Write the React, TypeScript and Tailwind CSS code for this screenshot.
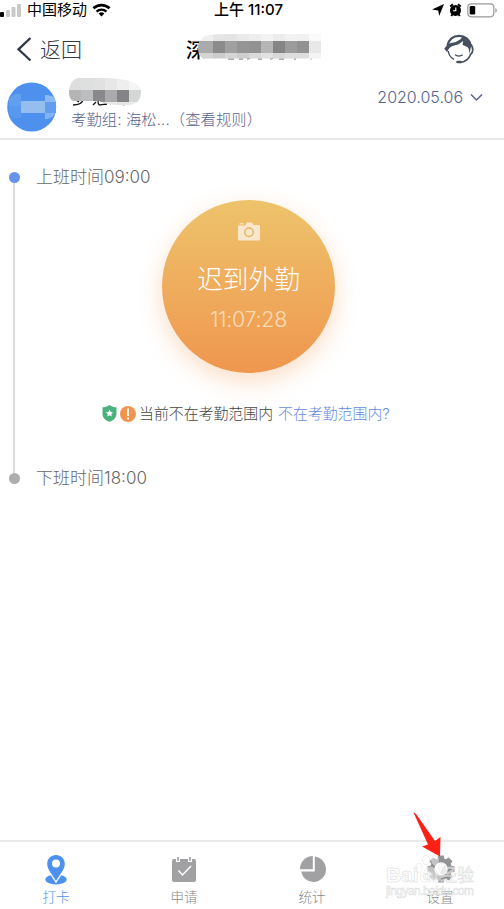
import { ReactNode } from 'react';

type TabItem = {
  label: string;
  active?: boolean;
  icon: ReactNode;
};

type Cell = [x: number, y: number, color: string];

const TITLE_CELLS: Cell[] = [
  [3, 0, '#efefef'],
  [18, 0, '#e6e6e6'],
  [30, 0, '#e4e4e4'],
  [42, 0, '#eaeaea'],
  [54, 0, '#eeeeee'],
  [66, 0, '#f3f3f3'],
  [78, 0, '#ececec'],
  [90, 0, '#f2f2f2'],
  [102, 0, '#f1f1f1'],
  [114, 0, '#fafafa'],
  [3, 7, '#aaaaaa'],
  [18, 7, '#8b8b8b'],
  [30, 7, '#a0a0a0'],
  [42, 7, '#959595'],
  [54, 7, '#929292'],
  [66, 7, '#b6b6b6'],
  [78, 7, '#858585'],
  [90, 7, '#9c9c9c'],
  [102, 7, '#929292'],
  [114, 7, '#e8e8e8'],
  [3, 19, '#d4d4d4'],
  [18, 19, '#cccccc'],
  [30, 19, '#d5d5d5'],
  [42, 19, '#cdcdcd'],
  [54, 19, '#d9d9d9'],
  [66, 19, '#e1e1e1'],
  [78, 19, '#d8d8d8'],
  [90, 19, '#dedede'],
  [102, 19, '#dddddd'],
  [114, 19, '#f4f4f4'],
];

const NAME_CELLS: Cell[] = [
  [0, 0, '#dedede'],
  [12, 0, '#dedfdf'],
  [24, 0, '#e1e1e1'],
  [36, 0, '#e7e7e7'],
  [48, 0, '#eeeeee'],
  [60, 0, '#f5f5f5'],
  [0, 12, '#b5b5b6'],
  [12, 12, '#bcbdbe'],
  [24, 12, '#88888d'],
  [36, 12, '#aaaaac'],
  [48, 12, '#838388'],
  [60, 12, '#d5d7d7'],
  [24, 24, '#e0e0e0'],
  [36, 24, '#e8e8e8'],
  [48, 24, '#e5e5e5'],
  [60, 24, '#e9eaea'],
];

const GEAR_TEETH = [0, 45, 90, 135, 180, 225, 270, 315];

function StatusBar() {
  return (
    <div className="flex h-5 items-center justify-between pr-[7px] text-black">
      <div className="flex w-[180px] items-center">
        <svg width="22" height="14" viewBox="0 0 22 14">
          <rect x="0" y="9" width="4" height="5" rx="1" fill="#000" />
          <rect x="6" y="7" width="4" height="7" rx="1" fill="#c9c9c9" />
          <rect x="11.500" y="4" width="4" height="10" rx="1" fill="#c9c9c9" />
          <rect x="17" y="1" width="4" height="13" rx="1" fill="#c9c9c9" />
        </svg>
        <span className="ml-[5px] text-[15px] leading-5">中国移动</span>
        <svg className="ml-[5px]" width="19" height="14" viewBox="0 0 20 14" fill="none" stroke="#000">
          <path d="M1.500 5.200a12.500 12.500 0 0 1 17 0" strokeWidth="2.800" />
          <path d="M4.800 8.600a7.600 7.600 0 0 1 10.400 0" strokeWidth="2.500" />
          <path d="M10 13.800 7 10.800a4.300 4.300 0 0 1 6 0z" fill="#000" stroke="none" />
        </svg>
      </div>
      <span className="text-[15px] font-medium leading-5">上午 11:07</span>
      <div className="flex w-[180px] items-center justify-end">
        <svg width="12" height="12" viewBox="0 0 12 12">
          <path d="M12 0 7.200 12 6.200 6.600 0 5.600z" fill="#000" />
        </svg>
        <svg className="ml-[5px]" width="13" height="14" viewBox="0 0 13 14">
          <path d="M1.200 3.500 4 1.300M11.800 3.500 9 1.300M2.200 13l1.500-2M10.800 13l-1.500-2" stroke="#000" strokeWidth="2" />
          <circle cx="6.500" cy="7.400" r="5.500" fill="#000" />
          <path d="M6.800 4.500v3.300H4" fill="none" stroke="#fff" strokeWidth="1.100" />
        </svg>
        <svg className="ml-[5px]" width="30" height="15" viewBox="0 0 30 15">
          <rect x=".8" y=".8" width="26" height="13" rx="3.500" fill="none" stroke="#999" strokeWidth="1.200" />
          <rect x="2.700" y="3" width="5.500" height="8.600" rx="1.300" fill="#000" />
          <path d="M28.400 5v4.800c1.800-.8 1.800-4 0-4.800z" fill="#999" />
        </svg>
      </div>
    </div>
  );
}

function ServiceIcon() {
  return (
    <svg width="32" height="32" viewBox="0 0 32 32" fill="none" stroke="#46505f">
      <path d="M4.500 12.500C6 6 10 2.800 16 2.800S26.500 6.500 27.600 12" strokeWidth="2.200" />
      <path d="M28 11.500c2.700 3.500 2.200 8-.4 10-1.800 4.500-5.700 7.500-10.700 7.900" strokeWidth="1.700" />
      <path d="M4.200 12 1.200 15.800l3 3.500c.8-3 2.500-5.400 5.500-6.400l6-1.600 4.500-3.200-.7 3.700 5.200 2.500c1.600 2 1.600 4.500 1.600 7l2.200-9.500-2.500-3.500-6-5.500-2.500 3.500-4.700 2.600-6 1.400z" fill="#46505f" stroke="none" />
      <path d="M5.300 18c.5 4 2.800 7 5.800 8.300" strokeWidth="1.400" />
      <path d="M12 21.800c2 1.700 5.500 1.700 7.700 0" strokeWidth="1.200" />
      <path d="M14.500 29h3" strokeWidth="2.600" strokeLinecap="round" />
    </svg>
  );
}

function Header() {
  return (
    <header className="flex h-[58px] items-center justify-between pl-4 pr-[29px] text-[#2f394a]">
      <button className="flex w-[168px] items-center" type="button">
        <svg width="16" height="26" viewBox="0 0 16 26" fill="none" stroke="#2f394a" strokeWidth="2.300">
          <path d="M14.500 2 2.500 13.300l12 11.200" />
        </svg>
        <span className="ml-2 pt-px text-[21px] font-light leading-7">返回</span>
      </button>
      <div className="flex flex-1 items-center text-black">
        <span className="pl-0.5 pt-[3px] text-[20px] font-medium leading-7">深</span>
        <svg className="-ml-[11px]" width="130" height="30" viewBox="0 0 130 30">
          <defs>
            <clipPath id="titleClip">
              <path d="M14 1C20 0 30 0 40 0h86v24.500H10C5 24 3 20 3 14S7 2 14 1z" />
            </clipPath>
          </defs>
          <path d="M33 25h6M44 25h4M52 25l3-.5M63 25h4M75 25l3-.5M84 25h5M99 25h2M115.500 25h1" stroke="#555" strokeWidth=".9" />
          <g clipPath="url(#titleClip)">
            {TITLE_CELLS.map(([x, y, color]) => (
              <rect key={`${x}-${y}`} x={x} y={y} width={x === 3 ? 15 : 12} height="12" fill={color} />
            ))}
          </g>
        </svg>
      </div>
      <ServiceIcon />
    </header>
  );
}

function UserRow() {
  return (
    <section className="flex h-[62px] border-b-2 border-[#e9e9e9] pl-1.5 pr-[21px] text-[#56648f]">
      <svg className="mt-1" width="52" height="52" viewBox="0 0 52 52">
        <circle cx="25.700" cy="25" r="24.500" fill="#4d90ee" />
        <path d="M3 16l6-4h6v12H3z" fill="#629fef" />
        <path d="M3 24h12v12H7l-4-4z" fill="#5998ef" />
        <path d="M15 19h24v12H15z" fill="#94beed" />
        <path d="M39 13c7 0 10 2 11 7H39z" fill="#8ebaf3" />
        <path d="M39 20h11v11H39z" fill="#639def" />
        <path d="M39 31h10c-2 4-5 6-10 6z" fill="#82b2f3" />
      </svg>
      <div className="ml-[11px] flex flex-1 flex-col">
        <svg width="74" height="31" viewBox="0 0 74 31">
          <defs>
            <clipPath id="nameClip">
              <path d="M9 0h30c18 1 33 4 33 13 0 8-3 13-12 14-11 1-21 0-30-4H6C1 23 0 18 0 14S2 1 9 0z" />
            </clipPath>
          </defs>
          <path d="M4 27c5 0 9-2 10-5M7 22l3 2M24 27l3-3M29 23c0 5 1 4 9 3M40 24l2 2M49 27v-2M54 27l3-1" fill="none" stroke="#111" strokeWidth="1.300" />
          <g clipPath="url(#nameClip)">
            {NAME_CELLS.map(([x, y, color]) => (
              <rect key={`${x}-${y}`} x={x} y={y} width="12" height="12" fill={color} />
            ))}
          </g>
        </svg>
        <p className="whitespace-pre pl-0.5 text-[15.300px] font-light leading-[21px] tracking-[0.080px]">考勤组: 海松...（查看规则）</p>
      </div>
      <button className="flex h-[38px] items-center" type="button">
        <span className="text-[16px] font-light">2020.05.06</span>
        <svg className="ml-[7px]" width="13" height="9" viewBox="0 0 13 9" fill="none" stroke="#56648f" strokeWidth="1.500">
          <path d="m1 1.500 5.500 5.500L12 1.500" />
        </svg>
      </button>
    </section>
  );
}

function PunchButton() {
  return (
    <button
      className="flex size-[173px] flex-col items-center rounded-full bg-linear-to-b from-[#edc36b] to-[#ef964f] pt-[22px] text-white shadow-[0_8px_24px_rgba(243,148,76,0.32)]"
      type="button"
    >
      <svg width="22" height="19" viewBox="0 0 22 19">
        <path d="M1 3.500h6L9 .5h5l1.500 2.500h5c1 0 1.500.5 1.500 1.500v12.500c0 1-.5 1.500-1.500 1.500h-19C.5 18.500 0 18 0 17V4.500c0-.6.300-1 1-1z" fill="#f8e7cd" />
        <path d="M1.500 1.800h4" stroke="#f8e7cd" strokeWidth="1.200" />
        <circle cx="11" cy="10.200" r="4.200" fill="none" stroke="#e9b566" strokeWidth="1.500" />
      </svg>
      <span className="mt-[21px] text-[25.700px] font-light leading-9">迟到外勤</span>
      <span className="mt-[7px] text-[21.500px] font-light leading-7 tracking-[-0.300px] text-[#f8dcb6]">11:07:28</span>
    </button>
  );
}

function Timeline() {
  return (
    <main className="flex h-[700px] items-start pt-[25px]">
      <div className="flex w-7 flex-col items-center pt-[7px]">
        <i className="size-[11px] rounded-full bg-[#6694ed]" />
        <i className="h-[290px] w-0.5 bg-[#dcdcde]" />
        <i className="size-[11px] rounded-full bg-[#adadad]" />
      </div>
      <div className="flex flex-1 flex-col pl-2 text-[17px] font-light text-[#666]">
        <p className="leading-6">上班时间09:00</p>
        <div className="mt-[11px] pl-[126px]">
          <PunchButton />
        </div>
        <div className="mt-[29px] flex items-center pl-[66px] text-[14.900px] leading-6">
          <svg className="-mt-0.5" width="15" height="17" viewBox="0 0 15 17">
            <path d="M7.500 0c2 1.700 4.300 2.300 7 2.300V9c0 3.800-3 6.300-7 7.800C3.500 15.300.5 12.800.5 9V2.300c2.700 0 5-.6 7-2.300z" fill="#49b17c" />
            <path d="m7.500 4.600 1.100 2.300 2.500.3-1.800 1.800.4 2.500-2.200-1.200-2.200 1.200.4-2.500L3.900 7.200l2.500-.3z" fill="#fff" />
          </svg>
          <svg className="ml-[3px]" width="16" height="16" viewBox="0 0 16 16">
            <circle cx="8" cy="8" r="8" fill="#ee954f" />
            <path d="M8 2.500v7.500M8 11.500v2" stroke="#fff" strokeWidth="1.800" />
          </svg>
          <span className="ml-[3px] text-[#444]">当前不在考勤范围内</span>
          <a className="ml-[5px] text-[#668be0]">不在考勤范围内?</a>
        </div>
        <p className="mt-[40px] leading-6">下班时间18:00</p>
      </div>
    </main>
  );
}

const TABS: TabItem[] = [
  {
    label: '打卡',
    active: true,
    icon: (
      <svg width="22" height="30" viewBox="0 0 22 30">
        <ellipse cx="11" cy="24.500" rx="10.700" ry="5" fill="#4d90ee" />
        <path d="M11 0c5 0 8.800 3.900 8.800 8.800 0 6-5 10.700-8.800 17.200C7.200 19.500 2.200 14.800 2.200 8.800 2.200 3.900 6 0 11 0z" fill="#4d90ee" />
        <path d="M5 18 11 27l6-9" fill="none" stroke="#fff" strokeWidth="1.300" />
        <circle cx="11" cy="8.600" r="4" fill="#fff" />
      </svg>
    ),
  },
  {
    label: '申请',
    icon: (
      <svg width="26" height="30" viewBox="0 0 26 30">
        <rect x="1" y="4" width="24" height="23" rx="2" fill="#a1a1a3" />
        <path d="M7 1.500v5.500M19 1.500v5.500" stroke="#fff" strokeWidth="4" />
        <path d="M7 2v4M19 2v4" stroke="#a1a1a3" strokeWidth="1.600" />
        <path d="m7.500 15.500 4 4.500 8.500-9" fill="none" stroke="#fff" strokeWidth="1.500" />
      </svg>
    ),
  },
  {
    label: '统计',
    icon: (
      <svg className="ml-0.5" width="28" height="30" viewBox="0 0 28 30">
        <path d="M13.800 1v13.300H1A13 13 0 0 1 13.800 1z" fill="#a1a1a3" />
        <path d="M15.800 1.500v15H2.200A12.500 12.500 0 0 0 14.400 27 12.600 12.600 0 0 0 27 14.500C27 8 22.500 2.500 15.800 1.500z" fill="#a1a1a3" />
      </svg>
    ),
  },
  {
    label: '设置',
    icon: (
      <svg className="ml-0.5" width="28" height="30" viewBox="0 0 28 30">
        <circle cx="14" cy="14" r="8.800" fill="none" stroke="#929295" strokeWidth="4" />
        {GEAR_TEETH.map((angle) => (
          <path key={angle} d="M11.300.5h5.400l.8 4h-7z" fill="#929295" transform={`rotate(${angle} 14 14)`} />
        ))}
      </svg>
    ),
  },
];

function Watermark() {
  return (
    <svg
      className="absolute left-[384px] top-2.5"
      width="104"
      height="50"
      viewBox="0 0 104 50"
      fill="#fff"
      fillOpacity=".45"
      stroke="#dadada"
      strokeWidth=".5"
    >
      <ellipse cx="35" cy="16" rx="3" ry="4.500" />
      <ellipse cx="42" cy="8" rx="3.500" ry="5" />
      <ellipse cx="51" cy="8" rx="3.500" ry="5" />
      <ellipse cx="58" cy="16" rx="3" ry="4.500" />
      <path d="M46 15c5 0 6 4 9 7 4 5 0 9-4 8-4-1-6-1-9 0-5 1-8-4-4-8 3-3 4-7 8-7z" />
      <g fontWeight="700" fontFamily="Liberation Sans, sans-serif">
        <text x="2" y="30" fontSize="21">Bai</text>
        <text x="39" y="28" fontSize="12">du</text>
      </g>
      <text x="56" y="29" fontSize="17" fontFamily="Noto Sans CJK SC, sans-serif">经验</text>
      <text x="2" y="43" fontSize="12" fontFamily="Liberation Sans, sans-serif" textLength="88">jingyan.baidu.com</text>
    </svg>
  );
}

function TabBar() {
  return (
    <nav className="relative flex h-[69px] border-t-2 border-[#e9e9e9]">
      {TABS.map(({ label, active, icon }) => (
        <div key={label} className="flex w-32 shrink-0 flex-col items-center pt-[13px] first:-ml-2">
          <div className="flex h-[30px] items-start">{icon}</div>
          <span className={active ? 'mt-0.5 text-[13.500px] font-light leading-5 text-[#4d90ee]' : 'mt-0.5 text-[13.500px] font-light leading-5 text-[#88888a]'}>
            {label}
          </span>
        </div>
      ))}
      <Watermark />
      <svg className="absolute left-[413px] top-[-30px]" width="28" height="46" viewBox="0 0 28 46">
        <path d="M.5.500c2 .5 3 2 4 3.500L22 29l5.500-4-.5 19.500L9 34.500l6-2z" fill="#fc2015" />
      </svg>
    </nav>
  );
}

export default function App() {
  return (
    <div className="flex h-[909px] w-[504px] flex-col overflow-hidden bg-white font-['Inter','Noto_Sans_CJK_SC',sans-serif]">
      <StatusBar />
      <Header />
      <UserRow />
      <Timeline />
      <TabBar />
    </div>
  );
}
